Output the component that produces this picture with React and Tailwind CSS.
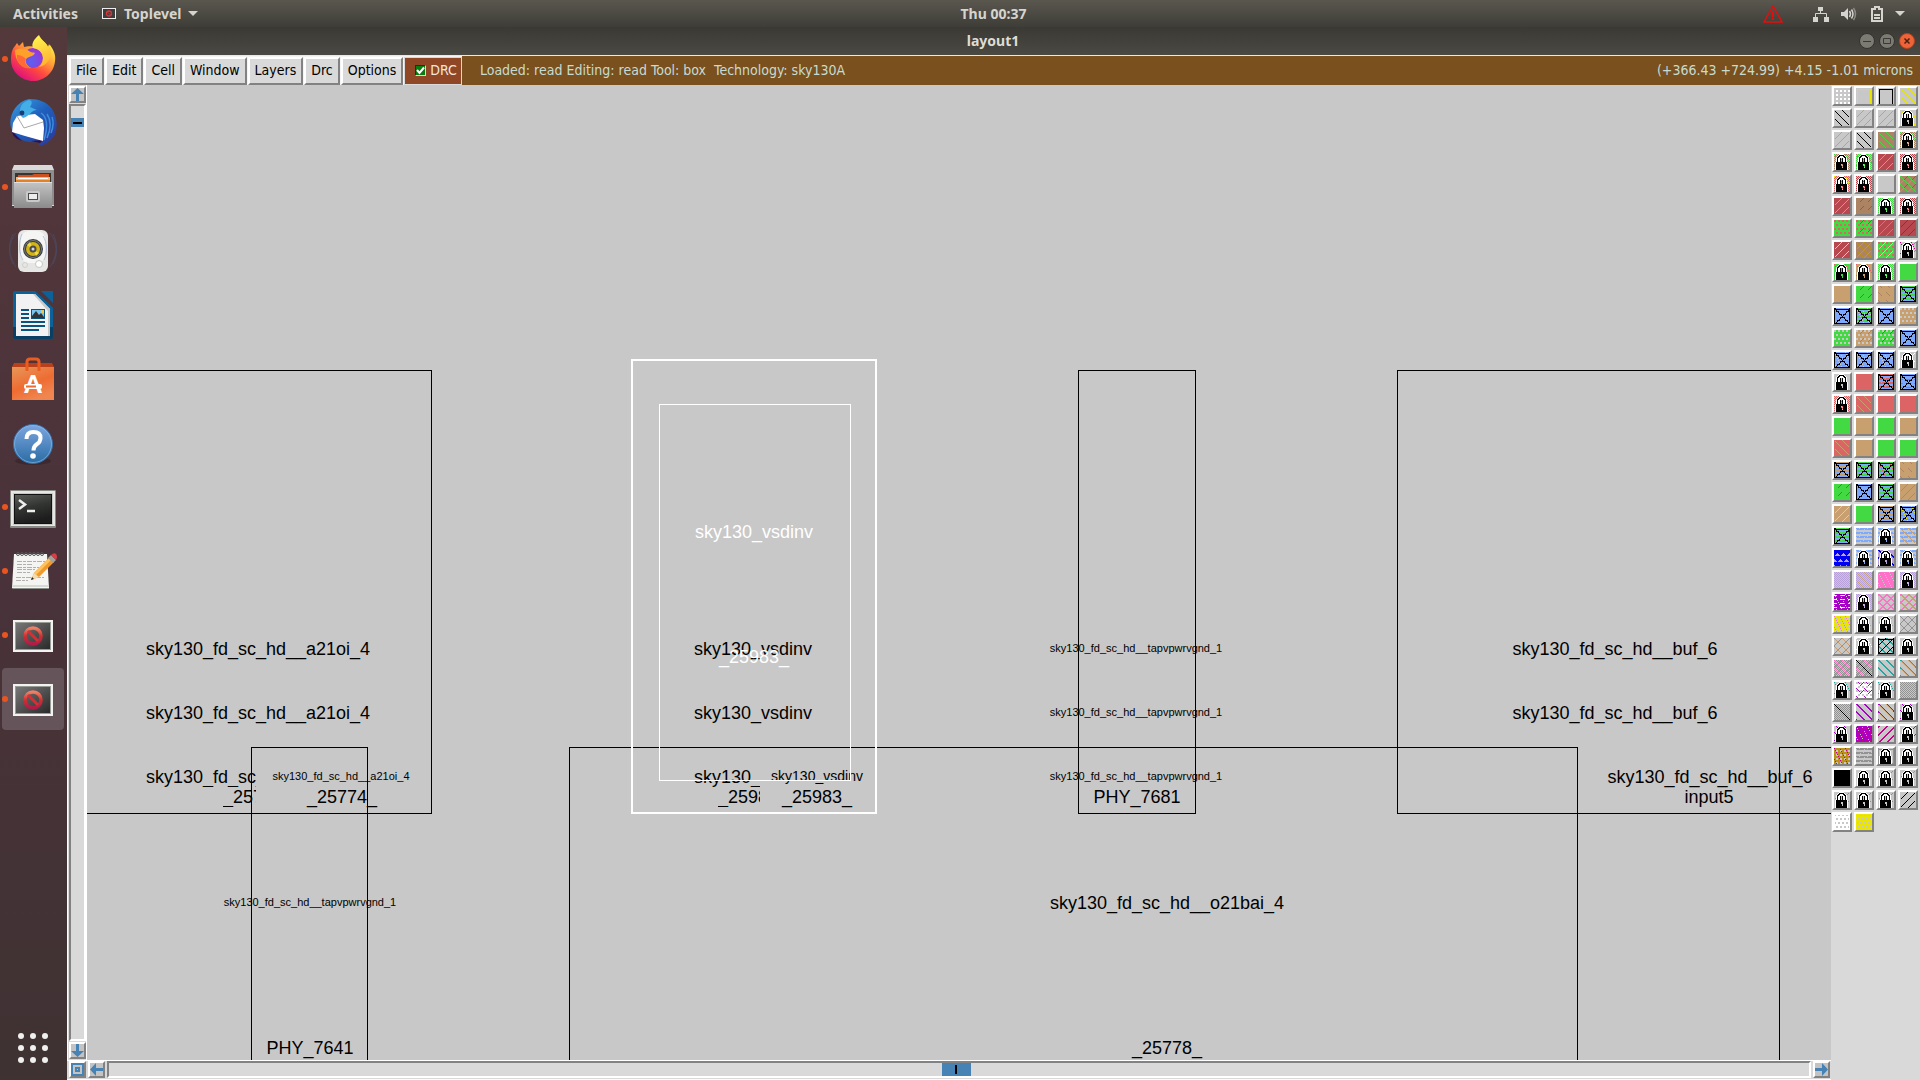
import React from "react";

/* ---------- layer palette ---------- */

const COLORS = {
  e: "#c8c8c8", g: "#42d942", t: "#c8a070", r: "#b84850", R: "#dc6464", n: "#ac8464",
  y: "#ebe600", B: "#7ca8ff", k: "#000000", m: "#a800c8", p: "#ff70c8", l: "#b8a0d8",
  T: "#20a8a0", M: "#c8008c", G: "#929292", N: "#bd9018", V: "#0000f0", w: "#ffffff",
};

const SIZE = 16;

const PATTERNS = {
  back: (x, y) => (x - y + 32) % 8 === 0 && x > 0 && x < 15,
  slash: (x, y) => (x + y) % 8 === 7 && x > 0 && x < 15,
  wideBack: (x, y) => (x - y + 32) % 8 < 2,
  wideSlash: (x, y) => (x + y) % 8 < 2,
  oneBack: (x, y) => x === y,
  dash: (x, y) => (x + y) % 8 === 7 && y % 8 < 4,
  dashBack: (x, y) => (x - y + 32) % 8 === 2 && (y + 2) % 8 < 4,
  cross: (x, y) => (x + y) % 8 === 7 || (x - y + 32) % 8 === 0,
  rings: (x, y) => [0, 1].includes((x + y) % 8) || [0, 1].includes((x - y + 32) % 8),
  dots: (x, y) => (x + 2) % 4 < 2 && (y + 2) % 4 < 2,
  stagger: (x, y) => y % 4 < 2 && (x + (Math.floor(y / 4) % 2) * 2) % 4 < 2,
  checker: (x, y) => (x + y) % 2 === 0,
  brick: (x, y) => y % 4 < 2 && !((x + y * 3) % 8 === 3),
  thin: (x, y) => y % 4 === 1 && (x + y * 2) % 8 < 5,
  specks: (x, y) => (x * 5 + y * 3) % 11 === 0,
  open: (x, y) => ((x === 1 || x === 14) && y > 0) || (y === 1 && x > 0 && x < 15),
  frame: (x, y) => x === 0 || x === 15 || y === 1 || y === 15,
  edge: (x, y) => x === 0 || x === 15 || y === 0 || y === 15,
  teeth: (x, y) => y % 6 > 2 && Math.abs(((x + (y > 8 ? 3 : 0)) % 6) - 3) < (y % 6) - 2,
  crossbox: (x, y) => {
    const d = Math.abs(x - y);
    const a = Math.abs(x + y - 16);
    return x === 0 || x === 15 || y === 1 || y === 15 || d === 0 || a === 0 || (y % 3 === 0 && (d === 1 || a === 1));
  },
};

const LOCK = [
  ".....wwwww......",
  "....wbbbbbw.....",
  "...wbbwwwbbw....",
  "..wbbwwwwwbbw...",
  "..wbwwb.bwwbw...",
  "..wbwwb.bwwbw...",
  "..wbwwb.bwwbw...",
  "..wbwwb.bwwbw...",
  ".wbbbbbbbbbbbw..",
  ".wbbbbbbbbbbbw..",
  ".wbbbbb..bbbbw..",
  ".wbbbbb..bbbbw..",
  ".wbbbbbb.bbbbw..",
  ".wbbbbbb.bbbbw..",
  ".wbbbbbbbbbbbw..",
  ".wbbbbbbbbbbbw..",
];

function pixels(test) {
  let d = "";
  for (let y = 0; y < SIZE; y++) {
    for (let x = 0; x < SIZE; x++) {
      if (test(x, y)) d += `M${x} ${y}h1v1h-1z`;
    }
  }
  return d;
}

const PATHS = Object.fromEntries(Object.entries(PATTERNS).map(([k, f]) => [k, pixels(f)]));
const LOCK_BLACK = pixels((x, y) => LOCK[y][x] === "b");
const LOCK_WHITE = pixels((x, y) => LOCK[y][x] === "w");

/* Each entry: background colour, then pattern:colour pairs; "lock" adds a padlock. */
const LAYERS = `
e dots:w|e open:y|e open:k|e back:y
e back:k|e slash:t|e slash:t|e back:y lock
e slash:t|e back:k|n back:g|e checker:n specks:g lock
e checker:n specks:g lock|e checker:g specks:n lock|r slash:t|e checker:r lock
e checker:R specks:y lock|e checker:r lock|e|n cross:g dash:r
r slash:t|n dash:r|e checker:g lock|e checker:r lock
g stagger:R|g stagger:R dash:r|r slash:N|r slash:M
r slash:y|n back:N slash:g|g stagger:R slash:y|e specks:M dash:n lock
g specks:R lock|t specks:R lock|e checker:g lock|g
t|g dash:r|t dashBack:n|B brick:g crossbox:k
B thin:t crossbox:k|B brick:g specks:e crossbox:k|B thin:t crossbox:k|t stagger:e
g stagger:e|t stagger:e dash:n|g stagger:e dash:r|B thin:t crossbox:k
B thin:g specks:e crossbox:k|B thin:t specks:e crossbox:k|B thin:g specks:e crossbox:k|e slash:w lock
e lock|R|B brick:R crossbox:k|B thin:R crossbox:k
e checker:R lock|R back:t|R|R
g|t|g|t
R back:t|t|g|g
B brick:t crossbox:k|B brick:g crossbox:k|B brick:g specks:R crossbox:k|t dashBack:n
g dash:r|B thin:t crossbox:k|B brick:g crossbox:k|t slash:N
t slash:y|g|B brick:t crossbox:k|B thin:N specks:y crossbox:k
B brick:g crossbox:k|e brick:B|e brick:B lock|e brick:B back:t
V teeth:l|e brick:B lock|l wideBack:V lock|e brick:B lock
e checker:l|e checker:l back:t|p specks:e|e checker:l lock
m thin:w specks:e|e checker:l lock|e rings:p|e rings:p back:t
y dots:e specks:p|e slash:p lock|e slash:p lock|e cross:G
e cross:G back:t|e specks:w lock|e wideBack:T slash:k frame:k|e lock
e checker:G cross:p|e checker:G cross:p oneBack:k|e wideBack:T|e wideBack:T back:t
e specks:T lock|w stagger:e dashBack:m dash:m|e specks:T lock|e checker:G
e checker:G oneBack:k|e wideBack:m|e wideBack:m back:t|e dashBack:m lock
e dashBack:m lock|m specks:e dots:M|e wideSlash:M|e dash:M lock
N dots:e thin:G specks:M|e brick:G|e frame:G lock|e dash:y lock
k|e lock|e slash:N lock|e slash:N lock
e slash:N lock|e slash:N lock|e slash:N lock|e slash:k
w stagger:e edge:w|y stagger:e edge:y`
  .trim()
  .split("\n")
  .flatMap((row) => row.split("|"));

function Swatch({ spec, index }) {
  const [bg, ...layers] = spec.trim().split(" ");
  return (
    <button
      type="button"
      aria-label={`Layer ${index + 1}`}
      className="size-5 border-2 border-t-white border-l-white border-r-[#828282] border-b-[#828282]"
    >
      <svg viewBox="0 0 16 16" className="block size-4" shapeRendering="crispEdges">
        <rect width="16" height="16" fill={COLORS[bg]} />
        {layers.map((layer) => {
          if (layer === "lock") {
            return (
              <g key={layer}>
                <path d={LOCK_WHITE} fill="#fff" />
                <path d={LOCK_BLACK} fill="#000" />
              </g>
            );
          }
          const [name, color] = layer.split(":");
          return <path key={layer} d={PATHS[name]} fill={COLORS[color]} />;
        })}
      </svg>
    </button>
  );
}

/* ---------- dock ---------- */

function Firefox() {
  return (
    <svg viewBox="0 0 48 48" className="size-12">
      <defs>
        <linearGradient id="fx-body" x1="0.85" y1="0.1" x2="0.25" y2="0.95">
          <stop offset="0" stopColor="#fff44f" />
          <stop offset="0.35" stopColor="#ffa436" />
          <stop offset="0.65" stopColor="#ff4a3f" />
          <stop offset="1" stopColor="#e0107c" />
        </linearGradient>
        <radialGradient id="fx-globe" cx="0.4" cy="0.7" r="0.7">
          <stop offset="0" stopColor="#5a62f0" />
          <stop offset="1" stopColor="#9a35d8" />
        </radialGradient>
        <linearGradient id="fx-tail" x1="0.3" y1="0" x2="0.6" y2="1">
          <stop offset="0" stopColor="#fff44f" />
          <stop offset="1" stopColor="#ffb030" />
        </linearGradient>
      </defs>
      <path fill="url(#fx-body)" d="M6 11l2-3 2 3 4-4 1 5c3-1 8-1 11 0L30 2c2 3 7 5 9 10l2-2c4 5 6 11 5 16-1 12-11 20-22 20S2 37 2 25C2 19 3 14 6 11z" />
      <circle cx="24" cy="23" r="10" fill="url(#fx-globe)" />
      <path fill="url(#fx-tail)" d="M30 0c-5 4-8 9-6 13 6 1 10 5 10 10 0 4-2 7-4 9 7-1 13-8 12-17 0-2-1-4-2-6l-1 3C38 8 32 5 30 0z" />
      <path fill="#ffa028" d="M6 15c5-2 10-2 14 1 2 2 5 1 6 2-2 4-5 3-8 5-3 3 0 8 4 10C12 34 6 26 6 15z" />
      <path fill="#ff6a38" d="M8 20c4 0 7 2 9 4-2 3 0 7 5 9-8 2-15-5-14-13z" />
    </svg>
  );
}

function Thunderbird() {
  return (
    <svg viewBox="0 0 48 48" className="size-12">
      <defs>
        <linearGradient id="tb" x1="0" y1="0" x2="0.8" y2="1">
          <stop offset="0" stopColor="#3ba0e0" />
          <stop offset="0.5" stopColor="#1f5fbc" />
          <stop offset="1" stopColor="#2c3c9c" />
        </linearGradient>
      </defs>
      <path fill="url(#tb)" d="M20 0c10 0 18 3 23 10 5 8 6 17 3 25-2 5-8 11-17 12l4-5C18 46 6 40 2 29-1 18 6 3 20 0z" />
      <path fill="#2a1257" d="M3 32l10 10-5-2c-3-2-5-5-5-8zM22 42l12-1-3 3z" />
      <path fill="#fff" d="M8 17l18-2 8 6 1 8-1 13-18-5L3 33l1-9z" />
      <path fill="none" stroke="#a8a8a8" strokeWidth="1" d="M8 17l7 12 19-6" />
      <path fill="#44aee6" d="M12 17c-3-8 1-14 8-16 4 1 3 4 1 7l7 3c-6 0-8 7-14 8z" />
      <circle cx="13" cy="14" r="2.4" fill="#183c74" />
      <path fill="none" stroke="#3a8ddd" strokeWidth="1.5" d="M32 14c6 4 7 14 3 27M38 15c4 6 4 15 0 24M43 18c2 5 1 11-1 16" />
    </svg>
  );
}

function Files() {
  return (
    <svg viewBox="0 0 48 48" className="size-12">
      <defs>
        <linearGradient id="cab" x1="0" y1="0" x2="0" y2="1">
          <stop offset="0" stopColor="#c4c4c4" />
          <stop offset="1" stopColor="#8b8b8b" />
        </linearGradient>
      </defs>
      <path fill="#d9d9d9" d="M5 2h38l2 5v36H3V7z" />
      <path fill="#8e8e8e" d="M3 7h42v35H3z" />
      <path fill="#3b3330" d="M6 10h36v10H6z" />
      <path fill="#cc5320" d="M9 12h14l2-1h15v9H8z" />
      <path fill="#f4ba74" d="M7 14h34v6H7z" />
      <path fill="#fff" d="M9 15h30v1H9z" />
      <path fill="#e38124" d="M7 17h34v3H7z" />
      <path fill="url(#cab)" d="M5 19h38v26H5z" />
      <path fill="#e0e0e0" d="M5 19h38v1H5z" />
      <rect x="17" y="28" width="14" height="11" rx="2" fill="#c9c9c9" />
      <rect x="19.500" y="30.500" width="9" height="6" fill="#ececec" stroke="#4b4b4b" />
    </svg>
  );
}

function Rhythmbox() {
  return (
    <svg viewBox="0 0 48 48" className="size-12">
      <g fill="none" stroke="#4a5a88" strokeOpacity=".4">
        <path d="M7 6C-1 16-1 28 7 40M4 7c-5 10-5 20 0 30M41 6c8 10 8 22 0 34M44 7c5 10 5 20 0 30" />
      </g>
      <rect x="9" y="3" width="30" height="42" rx="6" fill="#e6e6e4" />
      <rect x="12" y="4" width="24" height="32" rx="8" fill="#f5f5f3" />
      <circle cx="24" cy="22" r="10" fill="#393b3c" />
      <circle cx="24" cy="22" r="8.500" fill="none" stroke="#77797a" />
      <circle cx="24" cy="22" r="7" fill="#d4b414" />
      <path fill="#f1d848" d="M24 22l-6-4 3-3zM24 22l6 4-3 3z" />
      <circle cx="24" cy="22" r="3.500" fill="#4a4c4d" />
      <circle cx="24" cy="22" r="1.500" fill="#d8d8d8" />
      <circle cx="16" cy="38" r="2.500" fill="none" stroke="#d0d0ce" />
      <circle cx="30" cy="37" r="3.500" fill="#fff" stroke="#c5c5c3" />
      <path fill="none" stroke="#9fb4d8" strokeOpacity=".7" d="M13 7c-4 9-3 20 1 26M35 33c4-8 3-18-1-24" />
    </svg>
  );
}

function Writer() {
  return (
    <svg viewBox="0 0 48 48" className="size-12">
      <path fill="#0b6199" d="M6 0h20l18 17v29a2 2 0 0 1-2 2H6a2 2 0 0 1-2-2V2a2 2 0 0 1 2-2z" />
      <path fill="#083f63" d="M4 36h40v10a2 2 0 0 1-2 2H6a2 2 0 0 1-2-2z" />
      <path fill="#f2f2f2" d="M7 3h19l15 15v27H7z" />
      <path fill="#c8c8c8" d="M26 3l15 15v27h-2V20L24 3z" />
      <path fill="#0b6199" d="M32 0h12v12z" />
      <path stroke="#0a527f" strokeWidth="2" d="M12 19h8M12 23h8M12 27h8M12 31h24M12 35h24M12 39h18" />
      <path fill="#0a527f" d="M22 18h14v10H22z" />
      <path fill="#79c3ee" d="M23 19h12v8H23z" />
      <path fill="#ecc750" d="M32 19h3v3h-3z" />
      <path fill="#333" d="M23 27v-2l4-5 3 4 2-2 3 4v1z" />
    </svg>
  );
}

function Software() {
  return (
    <svg viewBox="0 0 48 48" className="size-12">
      <defs>
        <linearGradient id="bag" x1="0" y1="0" x2="0.5" y2="1">
          <stop offset="0" stopColor="#e8975a" />
          <stop offset="0.6" stopColor="#ee6c32" />
          <stop offset="1" stopColor="#f08550" />
        </linearGradient>
      </defs>
      <path fill="#b8401a" d="M5 8h38l2 4H3z" />
      <path fill="url(#bag)" d="M3 12h42v33H3z" />
      <path fill="none" stroke="#e95c22" strokeWidth="3" d="M18 16V7q0-3 3-3h6q3 0 3 3v9" />
      <text x="24" y="38" textAnchor="middle" fontFamily="Lato, sans-serif" fontWeight="900" fontSize="25" fill="#fff">A</text>
      <rect x="15" y="29" width="18" height="5" rx="2" fill="#fff" />
      <rect x="17" y="30.500" width="10" height="2" fill="#ee6c32" />
    </svg>
  );
}

function Help() {
  return (
    <svg viewBox="0 0 48 48" className="size-12">
      <defs>
        <linearGradient id="help" x1="0" y1="0" x2="0" y2="1">
          <stop offset="0" stopColor="#7da6e0" />
          <stop offset="1" stopColor="#2a6ca4" />
        </linearGradient>
      </defs>
      <ellipse cx="24" cy="42" rx="18" ry="4" fill="#000" fillOpacity=".2" />
      <circle cx="24" cy="25" r="19.500" fill="url(#help)" stroke="#3570ac" />
      <circle cx="24" cy="25" r="18.500" fill="none" stroke="#8fc0e8" strokeOpacity=".6" />
      <path fill="none" stroke="#fff" strokeWidth="4" d="M17.500 20q0-7 7-7 7 0 7 6 0 4-4 6.500-3 2-3 6" />
      <circle cx="24" cy="37" r="2.800" fill="#fff" />
    </svg>
  );
}

function Terminal() {
  return (
    <svg viewBox="0 0 48 48" className="size-12">
      <defs>
        <linearGradient id="term" x1="0" y1="0" x2="0.3" y2="1">
          <stop offset="0" stopColor="#5a5c58" />
          <stop offset="0.5" stopColor="#333533" />
          <stop offset="1" stopColor="#1c1d1c" />
        </linearGradient>
      </defs>
      <rect x="1" y="7" width="46" height="38" rx="1" fill="#888a85" />
      <rect x="2" y="8" width="44" height="35" fill="#e6e6e4" />
      <rect x="4" y="10" width="40" height="32" fill="#c8c8c6" />
      <rect x="5" y="11" width="38" height="30" fill="#111" />
      <rect x="6" y="12" width="36" height="28" fill="url(#term)" />
      <path fill="none" stroke="#eee" strokeWidth="2.500" d="M10 17l6 4.500-6 4.500M18 28h8" />
    </svg>
  );
}

function Gedit() {
  return (
    <svg viewBox="0 0 48 48" className="size-12">
      <path fill="#8a8c88" d="M4 40h36v2H3z" />
      <path fill="#f4f4f2" d="M5 7h33l2 34H3z" />
      <path fill="#d8dad6" d="M3 38h37v2H3z" />
      <g fill="none" stroke="#555" strokeWidth="1">
        <circle cx="9" cy="7" r="1.500" /><circle cx="13" cy="7" r="1.500" /><circle cx="17" cy="7" r="1.500" />
        <circle cx="21" cy="7" r="1.500" /><circle cx="25" cy="7" r="1.500" /><circle cx="29" cy="7" r="1.500" /><circle cx="33" cy="7" r="1.500" />
      </g>
      <path stroke="#b0b0ae" strokeDasharray="5 1 3 1" d="M8 14.500h28M8 17.500h15M8 20.500h22M8 22.500h18M8 25.500h13M7 30.500h28M7 33.500h12" />
      <path fill="#f0982c" d="M22 33l3-7 15-15 5 4-15 15z" />
      <path fill="#fbc460" d="M25 26l15-15 2 2-15 15z" />
      <path fill="#f2dcb4" d="M22 33l3-7 5 4z" />
      <path fill="#222" d="M22 33l1-3 2 2z" />
      <path fill="#a0a29e" d="M39 11l3-3 5 5-3 3z" />
      <path fill="#dc3c44" d="M42 8q3-3 5-1t0 6z" />
    </svg>
  );
}

function NoEntryWindow() {
  return (
    <svg viewBox="0 0 48 48" className="size-12">
      <defs>
        <linearGradient id="scr" x1="0" y1="0" x2="1" y2="1">
          <stop offset="0" stopColor="#777" />
          <stop offset="1" stopColor="#2a2a2a" />
        </linearGradient>
        <linearGradient id="no" x1="0" y1="0" x2="0" y2="1">
          <stop offset="0" stopColor="#ee8068" />
          <stop offset="0.5" stopColor="#d03030" />
          <stop offset="1" stopColor="#b01c48" />
        </linearGradient>
      </defs>
      <path fill="#f2f2f0" d="M4 9h40v32H4z" />
      <path fill="#999b97" d="M6 11h36v28H6z" />
      <path fill="url(#scr)" d="M7 12h34v26H7z" />
      <circle cx="24" cy="25" r="8" fill="none" stroke="url(#no)" strokeWidth="3.500" />
      <path stroke="#cf3236" strokeWidth="3" d="M19 20l10 10" />
    </svg>
  );
}

const DOCK = [
  { label: "Firefox", Icon: Firefox, running: true },
  { label: "Thunderbird", Icon: Thunderbird },
  { label: "Files", Icon: Files, running: true },
  { label: "Rhythmbox", Icon: Rhythmbox },
  { label: "LibreOffice Writer", Icon: Writer },
  { label: "Ubuntu Software", Icon: Software },
  { label: "Help", Icon: Help },
  { label: "Terminal", Icon: Terminal, running: true },
  { label: "Text Editor", Icon: Gedit, running: true },
  { label: "Toplevel", Icon: NoEntryWindow, running: true },
  { label: "Toplevel, active", Icon: NoEntryWindow, running: true, active: true },
];

function Dock() {
  return (
    <nav className="flex w-[67px] shrink-0 flex-col bg-linear-to-b from-[#54393b] via-[#4a323a] to-[#3f3233] pr-[3px] pl-[2px]">
      {DOCK.map(({ label, Icon, running, active }) => (
        <button
          key={label}
          type="button"
          aria-label={label}
          className={
            active
              ? "relative my-px flex h-[62px] items-center justify-center rounded-sm bg-[#66545b]"
              : "relative flex h-16 items-center justify-center pb-px"
          }
        >
          {running && <span className="absolute left-0 size-[6px] rounded-full bg-[#e95420]" />}
          <Icon />
        </button>
      ))}
      <button type="button" aria-label="Show Applications" className="mx-auto mt-auto mb-[17px] grid grid-cols-3 gap-[6px]">
        {Array.from({ length: 9 }, (_, i) => (
          <span key={i} className="size-[6px] rounded-full bg-[#f0f0ee]" />
        ))}
      </button>
    </nav>
  );
}

/* ---------- top bars ---------- */

function TopBar() {
  return (
    <header className="grid h-[27px] shrink-0 grid-cols-[1fr_auto_1fr] items-center bg-linear-to-b from-[#5a574f] to-[#3e3d37] pr-[15px] pl-3 font-['Noto_Sans',sans-serif] text-[14px] leading-5 font-bold text-[#d6d4ce]">
      <div className="flex items-center">
        <button type="button" className="pl-px">Activities</button>
        <button type="button" className="ml-6 flex items-center">
          <svg viewBox="0 0 14 11" className="mr-2 h-[11px] w-[14px]">
            <path fill="#eee" d="M0 0h14v11H0z" />
            <path fill="#3d3d3d" d="M1 1h12v9H1z" />
            <circle cx="7" cy="5.500" r="2.500" fill="none" stroke="#d8343a" strokeWidth="1.300" />
            <path stroke="#d8343a" d="M5.500 4l3 3" />
          </svg>
          Toplevel
          <svg viewBox="0 0 10 5" className="ml-[6px] h-[5px] w-[10px]"><path fill="#d6d4ce" d="M0 0h10L5 5z" /></svg>
        </button>
      </div>
      <time className="pl-[70px]">Thu 00:37</time>
      <div className="flex items-center justify-end">
        <svg viewBox="0 0 20 18" className="mr-[30px] h-[18px] w-5">
          <path fill="none" stroke="#e80c0c" strokeWidth="1.500" d="M10 1L19 17H1z" />
          <path stroke="#e80c0c" strokeWidth="2" d="M10 6v6M10 13v2" />
        </svg>
        <svg viewBox="0 0 16 16" className="mr-3 size-4">
          <path fill="#d6d4ce" d="M5 1h5v4H5zM0 11h5v5H0zM11 11h5v5h-5z" />
          <path fill="none" stroke="#d6d4ce" d="M7.500 5v3M2.500 11V7.500h11V11" />
        </svg>
        <svg viewBox="0 0 16 16" className="mr-[14px] size-4">
          <path fill="#d6d4ce" d="M0 6h3l4-4v12l-4-4H0z" />
          <path fill="none" stroke="#d6d4ce" strokeWidth="1.500" d="M8.500 5q2 3 0 6M10.500 3.500q3 4.500 0 9" />
          <path fill="none" stroke="#8c8a84" strokeWidth="1.500" d="M12.500 2q4 6 0 12" />
        </svg>
        <svg viewBox="0 0 12 16" className="mr-3 h-4 w-3">
          <path fill="none" stroke="#d6d4ce" strokeWidth="2" d="M1 3h3V1h4v2h3v12H1z" />
          <path fill="#d6d4ce" d="M3 8h6v2H3zM3 11h6v2H3z" />
        </svg>
        <svg viewBox="0 0 10 5" className="h-[5px] w-[10px]"><path fill="#d6d4ce" d="M0 0h10L5 5z" /></svg>
      </div>
    </header>
  );
}

function TitleBar() {
  return (
    <div className="grid h-7 shrink-0 grid-cols-[1fr_auto_1fr] items-center bg-linear-to-b from-[#3a3934] to-[#4b4943] pr-[5px] pb-px font-['Noto_Sans',sans-serif] text-[14px] font-bold text-[#dfdcd4]">
      <span />
      <h1 className="pl-1">layout1</h1>
      <div className="flex justify-end gap-1">
        <button type="button" aria-label="Minimize" className="size-4 rounded-full border border-[#33322d] bg-[#7b7a73]">
          <svg viewBox="0 0 14 14"><path stroke="#3a3934" d="M3 7.500h8" /></svg>
        </button>
        <button type="button" aria-label="Maximize" className="size-4 rounded-full border border-[#33322d] bg-[#7b7a73]">
          <svg viewBox="0 0 14 14"><path fill="none" stroke="#3a3934" d="M3.500 4.500h7v5h-7z" /></svg>
        </button>
        <button type="button" aria-label="Close" className="size-4 rounded-full border border-[#b3431e] bg-[#ee6338]">
          <svg viewBox="0 0 14 14"><path stroke="#4c2010" strokeWidth="1.500" d="M4.500 4.500l5 5M9.500 4.500l-5 5" /></svg>
        </button>
      </div>
    </div>
  );
}

const MENUS = ["File", "Edit", "Cell", "Window", "Layers", "Drc", "Options"];

function MenuBar() {
  return (
    <div className="flex h-[30px] shrink-0 items-stretch border-t border-t-[#e8e8e4] bg-[#7a501e] pr-[7px] font-['DejaVu_Sans_Condensed','DejaVu_Sans',sans-serif] text-[14px] leading-5">
      <div className="flex gap-px bg-[#f4f4f4] pt-px pl-[2px]">
        {MENUS.map((name) => (
          <button
            key={name}
            type="button"
            className="border-2 border-t-white border-l-white border-r-[#828282] border-b-[#828282] bg-[#d9d9d9] px-[5px] pb-[2px] text-black"
          >
            {name}
          </button>
        ))}
        <label className="flex items-center border border-[#d9d9d9] bg-[#8f4726] pr-1 pb-[2px] pl-[10px] text-[#f3e6de]">
          <span className="relative mr-1 flex size-[11px]">
            <input type="checkbox" defaultChecked className="size-[11px] appearance-none border border-t-[#04400a] border-l-[#04400a] border-r-[#d9d9d9] border-b-[#d9d9d9] bg-[#0a7d10]" />
            <svg viewBox="0 0 11 11" className="pointer-events-none absolute inset-0"><path fill="none" stroke="#fff" strokeWidth="2" d="M2 5l2.500 3L9 2.500" /></svg>
          </span>
          DRC
        </label>
      </div>
      <div className="flex grow items-center justify-between pb-[2px] pl-[18px] whitespace-pre text-[#c6dcd2]">
        <p>Loaded: read Editing: read Tool: box  Technology: sky130A</p>
        <p>(+366.43 +724.99) +4.15 -1.01 microns</p>
      </div>
    </div>
  );
}

/* ---------- scrollbars ---------- */

const ARROWS = {
  Up: "M6.500 0L13 6H8v7H5V6H0z",
  Down: "M6.500 13L13 7H8V0H5v7H0z",
  Left: "M0 6.500L6 0v5h7v3H6v5z",
  Right: "M13 6.500L7 0v5H0v3h7v5z",
};

function ScrollButton({ label, children }) {
  return (
    <button
      type="button"
      aria-label={label}
      className="flex size-[17px] shrink-0 items-center justify-center border-2 border-t-white border-l-white border-r-[#828282] border-b-[#828282] bg-[#c3c3c3]"
    >
      <svg viewBox="0 0 13 13" className="size-[13px] shrink-0">
        {children || <path fill="#4682b4" d={ARROWS[label]} />}
      </svg>
    </button>
  );
}

function VerticalScroll() {
  return (
    <div className="flex w-5 shrink-0 flex-col items-center gap-px border-x border-x-white bg-[#d9d9d9] py-px">
      <ScrollButton label="Up" />
      <div className="w-[17px] grow border-2 border-t-[#828282] border-l-[#828282] border-r-white border-b-white pt-3">
        <div className="flex h-[9px] items-center justify-center bg-[#4682b4]">
          <div className="h-[2px] w-[9px] bg-black" />
        </div>
      </div>
      <ScrollButton label="Down" />
    </div>
  );
}

function HorizontalScroll() {
  return (
    <div className="flex h-5 shrink-0 items-start gap-[2px] border-y border-y-white bg-[#d9d9d9] pr-px pl-[2px]">
      <ScrollButton label="Zoom">
        <path fill="none" stroke="#4682b4" strokeWidth="2" d="M1 1h11v11H1z" />
        <path fill="none" stroke="#4682b4" strokeWidth="2" d="M5 5h3v3H5z" />
      </ScrollButton>
      <ScrollButton label="Left" />
      <div className="flex h-[17px] grow justify-center border-2 border-t-[#828282] border-l-[#828282] border-r-white border-b-white pr-[6px]">
        <div className="flex w-[29px] items-center justify-center bg-[#4682b4]">
          <div className="h-[9px] w-[2px] bg-black" />
        </div>
      </div>
      <ScrollButton label="Right" />
    </div>
  );
}

/* ---------- layout canvas: free placement of cells and labels ---------- */

const BIG = "text-[18px]";
const MID = "text-[14px]";
const SMALL = "text-[11px]";

function Label({ at, size = BIG, children }) {
  return (
    <span className={`absolute -translate-x-1/2 leading-5 whitespace-nowrap ${size} ${at}`}>{children}</span>
  );
}

function Clipped({ at, children }) {
  return <span className={`absolute overflow-hidden text-[18px] leading-5 whitespace-nowrap ${at}`}>{children}</span>;
}

function Canvas() {
  return (
    <main className="relative grow overflow-hidden bg-[#c8c8c8] font-['Liberation_Sans',Arial,sans-serif] text-black">
      <Label at="left-[171px] top-[554px]">sky130_fd_sc_hd__a21oi_4</Label>
      <Label at="left-[171px] top-[618px]">sky130_fd_sc_hd__a21oi_4</Label>
      <Clipped at="left-[59px] top-[682px] w-[110px]">sky130_fd_sc_hd__a21oi_4</Clipped>
      <Clipped at="left-[136px] top-[702px] w-[33px]">_25774_</Clipped>
      <Label size={SMALL} at="left-[254px] top-[681px]">sky130_fd_sc_hd__a21oi_4</Label>
      <Label at="left-[255px] top-[702px]">_25774_</Label>
      <Label size={SMALL} at="left-[223px] top-[807px]">sky130_fd_sc_hd__tapvpwrvgnd_1</Label>
      <Label at="left-[223px] top-[953px]">PHY_7641</Label>

      <Label at="left-[666px] top-[554px]">sky130_vsdinv</Label>
      <Label at="left-[666px] top-[618px]">sky130_vsdinv</Label>
      <Clipped at="left-[607px] top-[682px] w-[66px]">sky130_vsdinv</Clipped>
      <Clipped at="left-[631px] top-[702px] w-[42px]">_25983_</Clipped>
      <Label size={MID} at="left-[730px] top-[681px]">sky130_vsdinv</Label>
      <Label at="left-[730px] top-[702px]">_25983_</Label>

      <Label size={SMALL} at="left-[1049px] top-[553px]">sky130_fd_sc_hd__tapvpwrvgnd_1</Label>
      <Label size={SMALL} at="left-[1049px] top-[617px]">sky130_fd_sc_hd__tapvpwrvgnd_1</Label>
      <Label size={SMALL} at="left-[1049px] top-[681px]">sky130_fd_sc_hd__tapvpwrvgnd_1</Label>
      <Label at="left-[1050px] top-[702px]">PHY_7681</Label>
      <Label at="left-[1080px] top-[808px]">sky130_fd_sc_hd__o21bai_4</Label>
      <Label at="left-[1080px] top-[953px]">_25778_</Label>

      <Label at="left-[1528px] top-[554px]">sky130_fd_sc_hd__buf_6</Label>
      <Label at="left-[1528px] top-[618px]">sky130_fd_sc_hd__buf_6</Label>
      <Label at="left-[1623px] top-[682px]">sky130_fd_sc_hd__buf_6</Label>
      <Label at="left-[1622px] top-[702px]">input5</Label>

      <div className="absolute top-[285px] left-0 h-[444px] w-[345px] border-y border-r border-black" />
      <div className="absolute top-[662px] bottom-0 left-[164px] w-[117px] border-x border-t border-black" />
      <div className="absolute top-[662px] bottom-0 left-[482px] w-[1009px] border-x border-t border-black" />
      <div className="absolute top-[285px] left-[991px] h-[444px] w-[118px] border border-black" />
      <div className="absolute top-[285px] right-0 left-[1310px] h-[444px] border-y border-l border-black" />
      <div className="absolute top-[662px] right-0 bottom-0 left-[1692px] border-t border-l border-black" />
      <div className="absolute top-[274px] left-[544px] h-[455px] w-[246px] border-2 border-white" />
      <div className="absolute top-[319px] left-[572px] h-[377px] w-[192px] border border-white" />

      <Label at="left-[667px] top-[437px] text-white">sky130_vsdinv</Label>
      <Label at="left-[667px] top-[562px] text-white">_25983_</Label>
    </main>
  );
}

export default function App() {
  return (
    <div className="flex h-screen w-full flex-col overflow-hidden bg-[#d9d9d9]">
      <TopBar />
      <div className="flex min-h-0 grow">
        <Dock />
        <section className="flex min-w-0 grow flex-col">
          <TitleBar />
          <MenuBar />
          <div className="flex min-h-0 grow">
            <div className="flex min-w-0 grow flex-col">
              <div className="flex min-h-0 grow">
                <VerticalScroll />
                <Canvas />
              </div>
              <HorizontalScroll />
            </div>
            <aside className="grid w-[89px] shrink-0 grid-cols-[repeat(4,20px)] content-start gap-[2px] bg-[#d9d9d9] pt-px pl-px">
              {LAYERS.map((spec, i) => (
                <Swatch key={i} spec={spec} index={i} />
              ))}
            </aside>
          </div>
        </section>
      </div>
    </div>
  );
}
